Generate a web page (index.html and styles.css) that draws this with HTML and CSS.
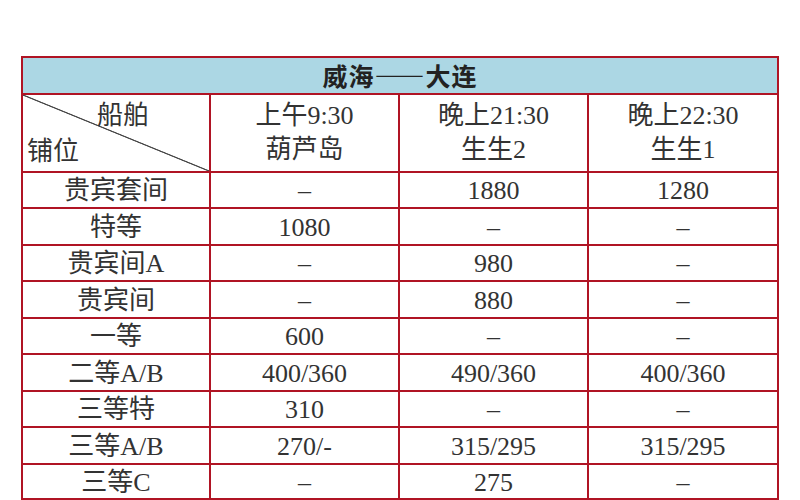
FILE: index.html
```html
<!DOCTYPE html>
<html lang="zh-CN">
<head>
<meta charset="utf-8">
<title>威海——大连</title>
<link rel="stylesheet" href="styles.css">
</head>
<body>
<div class="page">
<table class="fares">
<colgroup>
<col class="c1"><col class="c2"><col class="c3"><col class="c4">
</colgroup>
<tr class="title-row"><th colspan="4" class="title">威海——大连</th></tr>
<tr class="head-row">
<td class="diag"><div class="diag-box"><span class="ship">船舶</span><span class="berth">铺位</span></div></td>
<td><div class="two">上午9:30</div><div class="two">葫芦岛</div></td>
<td><div class="two">晚上21:30</div><div class="two">生生2</div></td>
<td><div class="two">晚上22:30</div><div class="two">生生1</div></td>
</tr>
<tr><td>贵宾套间</td><td>–</td><td>1880</td><td>1280</td></tr>
<tr><td>特等</td><td>1080</td><td>–</td><td>–</td></tr>
<tr><td>贵宾间A</td><td>–</td><td>980</td><td>–</td></tr>
<tr><td>贵宾间</td><td>–</td><td>880</td><td>–</td></tr>
<tr><td>一等</td><td>600</td><td>–</td><td>–</td></tr>
<tr><td>二等A/B</td><td>400/360</td><td>490/360</td><td>400/360</td></tr>
<tr><td>三等特</td><td>310</td><td>–</td><td>–</td></tr>
<tr><td>三等A/B</td><td>270/-</td><td>315/295</td><td>315/295</td></tr>
<tr class="last"><td>三等C</td><td>–</td><td>275</td><td>–</td></tr>
</table>
</div>
</body>
</html>
```
FILE: styles.css
```css
html, body {
  margin: 0;
  padding: 0;
  background: #ffffff;
}
.page {
  padding: 56px 0 0 21px;
}
.fares {
  border-collapse: collapse;
  table-layout: fixed;
  width: 756px;
  font-family: "Liberation Serif", "Noto Sans CJK SC", serif;
  font-size: 26px;
  color: #333333;
}
.c1 { width: 188px; }
.c2 { width: 189px; }
.c3 { width: 189px; }
.c4 { width: 190px; }
.fares td, .fares th {
  border: 2px solid #b01424;
  padding: 0;
  text-align: center;
  vertical-align: middle;
  line-height: 30px;
}
.fares td {
  padding-top: 3px;
}
.fares tr { height: 36.5px; }
.fares tr.last { height: 34px; }
.title-row { height: 36px; }
.fares tr.head-row { height: 78px; }
.fares tr.head-row td { padding-top: 0; }
.title {
  background: #acd7e4;
  font-weight: bold;
  font-family: "Noto Sans CJK SC", sans-serif;
  font-size: 25px;
  letter-spacing: 1px;
  color: #222;
}
.two {
  line-height: 34px;
}
.diag {
  background: linear-gradient(to top right, transparent calc(50% - 1px), #4a4a4a calc(50% - 0.3px), #4a4a4a calc(50% + 0.3px), transparent calc(50% + 1px));
}
.diag-box {
  height: 76px;
  display: flex;
  flex-direction: column;
  justify-content: space-between;
  text-align: left;
  padding: 6px 0 4px 4px;
  box-sizing: border-box;
}
.ship {
  padding-left: 70px;
  line-height: 30px;
}
.berth {
  line-height: 30px;
}
```
